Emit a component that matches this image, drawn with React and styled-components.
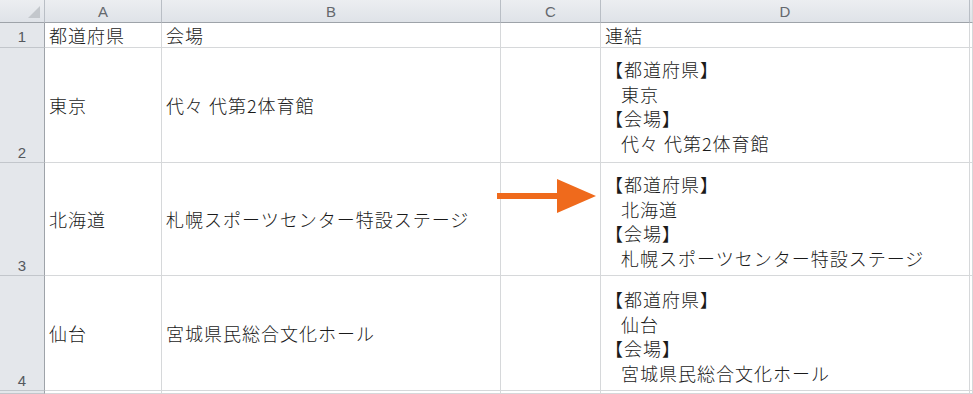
import React from "react";
import styled, { createGlobalStyle } from "styled-components";

const Global = createGlobalStyle`
  html, body { margin: 0; padding: 0; background: #ffffff; }
  body { font-family: "Noto Sans CJK JP", "Liberation Sans", sans-serif; }
`;

const Sheet = styled.div`
  position: relative;
  width: 973px;
  height: 394px;
  overflow: hidden;
  display: grid;
  grid-template-columns: 45px 117px 339px 100px 369px 1fr;
  grid-template-rows: 23px 25px 115px 113px 115px 1fr;
  background: #fff;
`;

const ColHead = styled.div`
  box-sizing: border-box;
  background: linear-gradient(#eceef1, #dfe3e8);
  border-right: 1px solid #b9bec5;
  border-bottom: 1px solid #9ea3a9;
  display: flex;
  align-items: center;
  justify-content: center;
  font-family: "Liberation Sans", "DejaVu Sans", sans-serif;
  font-size: 15px;
  color: #64686d;
`;

const Corner = styled(ColHead)`
  position: relative;
`;

const CornerTri = styled.div`
  position: absolute;
  right: 4px;
  bottom: 4px;
  width: 0;
  height: 0;
  border-left: 12px solid transparent;
  border-bottom: 12px solid #c3c7cc;
`;

const RowHead = styled.div`
  box-sizing: border-box;
  background: #e4e7eb;
  border-right: 1px solid #9ea3a9;
  border-bottom: 1px solid #c2c6cb;
  display: flex;
  align-items: flex-end;
  justify-content: center;
  padding-bottom: ${(p) => (p.$short ? "2px" : "1px")};
  font-family: "Liberation Sans", "DejaVu Sans", sans-serif;
  font-size: 15px;
  color: #55595e;
`;

const Cell = styled.div`
  box-sizing: border-box;
  border-right: 1px solid #d6d8da;
  border-bottom: 1px solid #d6d8da;
  display: flex;
  align-items: center;
  padding-left: 4px;
  font-size: 18px;
  font-weight: 300;
  letter-spacing: 1px;
  color: #1a1a1a;
  white-space: nowrap;
  overflow: hidden;
`;

const Filler = styled.div`
  box-sizing: border-box;
  border-right: 1px solid #d6d8da;
  background: ${(p) => (p.$head ? "linear-gradient(#eceef1, #dfe3e8)" : "#fff")};
  border-bottom: 1px solid ${(p) => (p.$head ? "#9ea3a9" : "#d6d8da")};
`;

const Block = styled.div`
  display: flex;
  flex-direction: column;
  padding-top: ${(p) => p.$pt || 0}px;
`;

const Line = styled.div`
  line-height: 24.5px;
  padding-left: ${(p) => (p.$indent ? "16px" : "0")};
`;

const Arrow = styled.svg`
  position: absolute;
  left: 0;
  top: 0;
  pointer-events: none;
`;

const rows = [
  { n: "2", pref: "東京", venue: "代々 代第2体育館", pt: 2 },
  { n: "3", pref: "北海道", venue: "札幌スポーツセンター特設ステージ", pt: 4 },
  { n: "4", pref: "仙台", venue: "宮城県民総合文化ホール", pt: 6 },
];

export default function App() {
  return (
    <>
      <Global />
      <Sheet>
        <Corner>
          <CornerTri />
        </Corner>
        <ColHead>A</ColHead>
        <ColHead>B</ColHead>
        <ColHead>C</ColHead>
        <ColHead>D</ColHead>
        <Filler $head />

        <RowHead $short>1</RowHead>
        <Cell>都道府県</Cell>
        <Cell>会場</Cell>
        <Cell />
        <Cell>連結</Cell>
        <Filler />

        {rows.map((r) => (
          <React.Fragment key={r.n}>
            <RowHead>{r.n}</RowHead>
            <Cell>{r.pref}</Cell>
            <Cell>{r.venue}</Cell>
            <Cell />
            <Cell>
              <Block $pt={r.pt}>
                <Line>【都道府県】</Line>
                <Line $indent>{r.pref}</Line>
                <Line>【会場】</Line>
                <Line $indent>{r.venue}</Line>
              </Block>
            </Cell>
            <Filler />
          </React.Fragment>
        ))}

        <RowHead />
        <Cell />
        <Cell />
        <Cell />
        <Cell />
        <Filler />

        <Arrow width="973" height="394" viewBox="0 0 973 394">
          <rect x="497" y="193" width="62" height="6" fill="#ef6a1c" />
          <polygon points="557,179 596,196 557,213" fill="#ef6a1c" />
        </Arrow>
      </Sheet>
    </>
  );
}
